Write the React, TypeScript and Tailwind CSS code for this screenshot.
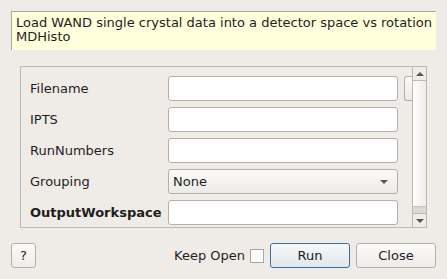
import React from 'react';

const rows = [
  { label: 'Filename', kind: 'file' },
  { label: 'IPTS', kind: 'text' },
  { label: 'RunNumbers', kind: 'text' },
  { label: 'Grouping', kind: 'combo' },
  { label: 'OutputWorkspace', kind: 'text', bold: true },
];

const Arrow: React.FC<{ up?: boolean }> = ({ up }) => (
  <svg width="8" height="4" viewBox="0 0 8 4">
    {up ? <polygon points="0,4 8,4 4,0" fill="#555" /> : <polygon points="0,0 8,0 4,4" fill="#555" />}
  </svg>
);

const App: React.FC = () => {
  return (
    <div
      className="w-[447px] h-[279px] bg-[#efebe7] text-[13px] text-[#1e1e1e] flex flex-col overflow-hidden"
      style={{ fontFamily: '"DejaVu Sans", "Liberation Sans", sans-serif' }}
    >
      {/* description */}
      <div className="mt-[11px] mx-[11px] h-[39px] bg-[#ffffdc] border-t border-l border-[#a9a9a4] pl-[4px] pt-[4px] leading-[14px] whitespace-nowrap overflow-hidden">
        <div>Load WAND single crystal data into a detector space vs rotation</div>
        <div>MDHisto</div>
      </div>

      {/* properties frame */}
      <div className="ml-[20px] mt-[16px] w-[407px] h-[162px] border border-[#bbb8b3] flex">
        <div className="flex-1 overflow-hidden pl-[9px] pt-[9px] flex flex-col gap-[6px]">
          {rows.map(r => (
            <div key={r.label} className="flex items-center h-[25px] shrink-0">
              <div className={`w-[138px] shrink-0 whitespace-nowrap ${r.bold ? 'font-bold' : ''}`}>{r.label}</div>
              {r.kind === 'combo' ? (
                <div className="w-[230px] shrink-0 h-[25px] rounded-[3px] border border-[#b3b0ab] bg-gradient-to-b from-[#fafaf9] to-[#edebe8] flex items-center justify-between pl-[4px] pr-[9px]">
                  <span>None</span>
                  <Arrow />
                </div>
              ) : (
                <div className="w-[230px] shrink-0 h-[25px] rounded-[3px] border border-[#b3b0ab] bg-white" />
              )}
              {r.kind === 'file' && (
                <div className="ml-[6px] w-[12px] shrink-0 h-[25px] rounded-l-[3px] border border-r-0 border-[#b3b0ab] bg-gradient-to-b from-[#fafaf9] to-[#edebe8]" />
              )}
            </div>
          ))}
        </div>
        {/* scrollbar */}
        <div className="w-[14px] border-l border-[#bbb8b3] flex flex-col shrink-0">
          <div className="h-[14px] border-b border-[#bbb8b3] flex items-center justify-center">
            <Arrow up />
          </div>
          <div className="flex-1 bg-gradient-to-r from-[#ffffff] to-[#eeece9] border-b border-[#c8c5c0]" />
          <div className="h-[6px] bg-[#dcd9d5]" />
          <div className="h-[14px] border-t border-[#bbb8b3] flex items-center justify-center">
            <Arrow />
          </div>
        </div>
      </div>

      {/* bottom buttons */}
      <div className="mt-[15px] px-[11px] flex items-center h-[25px]">
        <div className="w-[25px] h-[25px] rounded-[3px] border border-[#b3b0ab] bg-gradient-to-b from-[#fbfbfa] to-[#eeece9] flex items-center justify-center">
          ?
        </div>
        <div className="flex-1" />
        <span className="mr-[5px]">Keep Open</span>
        <div className="w-[14px] h-[14px] border border-[#aaa7a2] bg-white mr-[6px]" />
        <div className="w-[80px] h-[25px] rounded-[3px] border border-[#3a6f9b] bg-gradient-to-b from-[#f6f8fa] to-[#e2e7ec] flex items-center justify-center mr-[6px]">
          Run
        </div>
        <div className="w-[80px] h-[25px] rounded-[3px] border border-[#b3b0ab] bg-gradient-to-b from-[#fbfbfa] to-[#eeece9] flex items-center justify-center">
          Close
        </div>
      </div>
    </div>
  );
};

export default App;
